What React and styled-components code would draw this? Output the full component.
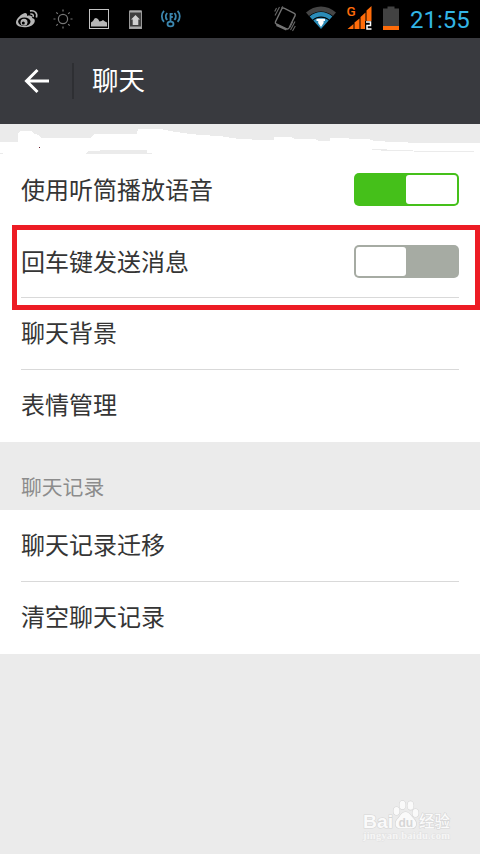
import React from "react"
import styled, { createGlobalStyle } from "styled-components"

const GlobalStyle = createGlobalStyle`
  * {
    box-sizing: border-box;
  }
  body {
    margin: 0;
    background: #ebebeb;
    font-family: "Noto Sans CJK SC", sans-serif;
  }
`

function WeiboIcon() {
  return (
    <Icon width="24" height="22" viewBox="15 8 24 22">
      <path
        d="M16 22.500C16 19 21.500 13.600 25 13c2 0 2.400 1.600 2 2.900 2.800-1 5.600-.4 5.200 2.100 2.700.7 3.300 2.600 2 4.900-2 3.300-6.200 4.400-10 4.300C19.300 27 16 25.500 16 22.500z"
        fill="#b5b5b5"
      />
      <ellipse cx="24.300" cy="21.800" rx="6.200" ry="4.200" fill="#000" />
      <circle cx="24" cy="22.300" r="3.500" fill="#b5b5b5" />
      <circle cx="23.300" cy="23" r="1.500" fill="#000" />
      <g fill="none" stroke="#b5b5b5" strokeWidth="1.600">
        <path d="M30 10.900c4.800-1 7.800 2.300 6.400 6.500" />
        <path d="M30.300 14c2.300-.4 3.400 1 2.800 2.900" />
      </g>
    </Icon>
  )
}

function SunIcon() {
  return (
    <Icon width="20" height="20" viewBox="53 9 20 20">
      <g fill="none" stroke="#777" strokeWidth="1.200">
        <circle cx="63" cy="19" r="4.600" />
        <path d="M63 9.500v2M63 26.500v2M53.500 19h2M70.500 19h2M56.300 12.300l1.500 1.500M68.200 24.200l1.500 1.500M69.700 12.300l-1.500 1.500M57.800 24.200l-1.500 1.500" />
      </g>
    </Icon>
  )
}

function PictureIcon() {
  return (
    <Icon width="20" height="20" viewBox="89 9 20 20">
      <rect x="89.500" y="9.500" width="19" height="19" fill="none" stroke="#c4c4c4" />
      <path d="M91 26.500v-4l2-1.500 1.500-2.500 1.500-.5 2 1 1.500 2.500 2-.5 1.500-1 2 1.500 2 1v4z" fill="#b5b5b5" />
    </Icon>
  )
}

function UploadIcon() {
  return (
    <Icon width="13" height="19" viewBox="129 9 13 19">
      <rect x="129.500" y="10" width="12" height="17.500" fill="#3e3e3e" stroke="#999" />
      <path d="M130 10.500h11M130 26.500h11" stroke="#aaa" strokeWidth="2" />
      <path d="M135.500 14l4.500 4.500h-1.700V24h-5.600v-5.500H131z" fill="#d0d0d0" />
    </Icon>
  )
}

function HotspotIcon() {
  return (
    <Icon width="20" height="18" viewBox="161 10 20 18">
      <g fill="none" stroke="#3b86ae" strokeWidth="1.800">
        <path d="M164 10.800c-2.900 3-2.900 8 0 11M177.600 10.800c2.900 3 2.900 8 0 11" />
        <path d="M167.200 13c-1.800 2-1.800 4.800 0 7M174.400 13c1.800 2 1.800 4.800 0 7" />
        <ellipse cx="170.500" cy="24" rx="3" ry="2.400" />
        <path d="M170.500 22v-9M170.500 13.800h2.300M170.500 17h2.300" />
      </g>
    </Icon>
  )
}

function VibrateIcon() {
  return (
    <Icon width="22" height="26" viewBox="274 5 22 26">
      <g fill="none" stroke="#747474" strokeWidth="1.400">
        <path d="M284 8.200l10.300 5.100q1.500.8.800 2.300L289 28q-.8 1.500-2.300.8L276.300 24q-1.500-.8-.8-2.300L281.700 9q.8-1.600 2.300-.8z" />
        <path d="M276.500 25l10 4.700" strokeWidth="2" />
      </g>
      <path
        d="M283 6.500l-1.500 1.500M279.500 7l-4.500 8.500M276.500 8l-1.800 3.500M295 21.500l-4.500 8.500M295.300 26l-2.800 5M292.800 21.500l-3 6"
        fill="none"
        stroke="#666"
        strokeWidth="1.100"
      />
    </Icon>
  )
}

function WifiIcon() {
  return (
    <Icon width="31" height="24" viewBox="306 6 31 24">
      <path d="M306 12.500c8.500-8 21.500-8 30 0l-3 3.500c-7-6-17-6-24 0z" fill="#454545" />
      <path d="M309.600 16.500c6.500-6 16.300-6 22.800 0l-3 3.200c-4.900-4.200-11.900-4.200-16.800 0z" fill="#2b8cb8" />
      <path d="M313.300 20.500c4.300-3.700 11.100-3.700 15.400 0L321 29z" fill="#2b8cb8" />
      <path d="M316.500 18.800h8.500v2.200h-1.400v2L321 27l-2.800-4v-2h-1.700z" fill="#fff" />
    </Icon>
  )
}

function SignalIcon() {
  return (
    <Icon width="26" height="26" viewBox="347 5 26 26">
      <text x="346.500" y="16" fill="#ff6c0a" fontFamily="Roboto, sans-serif" fontSize="13.500" fontWeight="500">
        G
      </text>
      <path d="M347.500 29l6-5v5zM354.500 22.500l5-4V29h-5zM360.500 17l5-4.500V29h-5zM366.500 10.500l5-4.500v23h-5z" fill="#ff6c0a" />
      <rect x="365" y="21" width="7" height="9" fill="#000" />
      <path d="M366 22h4.500v3.500H367v3.500h4.500" fill="none" stroke="#fff" strokeWidth="1.500" />
    </Icon>
  )
}

function BatteryIcon() {
  return (
    <Icon width="16" height="24" viewBox="383 6 16 24">
      <path d="M383 8.500h4.500V6.500h7v2H399V30h-16z" fill="#424242" />
      <path d="M383 26h16v4h-16z" fill="#ff6c0a" />
    </Icon>
  )
}

function BackIcon() {
  return (
    <Icon width="26" height="26" viewBox="0 0 26 26">
      <path d="M13.500 2L2.500 13l11 11M3 13h22" fill="none" stroke="#fff" strokeWidth="3" />
    </Icon>
  )
}

// white brush strokes that cover the top of the list
function Scribble() {
  return (
    <ScribbleSvg width="480" height="30" viewBox="0 124 480 30" shapeRendering="crispEdges">
      <path
        fill="#fff"
        d="M0 142h18v-8l2-3h11l2 2 5 2 4 3h49l3-4h43l1-5h22l10 2 13 2 17 2 20 1 19 3h13v1h22v-3h18v1l4 1h19l4 2h11v-3h19v1h19l6 2 21 1 26 1h59v11H0z"
      />
      <path fill="#ebebeb" d="M0 153h3v1H0zM85 154l3-3h11l1-1h47v3h5v1zM372 149h15v1h-15zM381 150h32v1h-32zM414 151h60v1h-60z" />
      <path fill="#6a1a28" d="M39 147h1v1h-1z" />
    </ScribbleSvg>
  )
}

function BaiduMark() {
  return (
    <Watermark width="94" height="46" viewBox="360 798 94 46">
      <g fill="#fafafa" stroke="#d6d6d6" strokeWidth="1.200" paintOrder="stroke">
        <ellipse cx="396.500" cy="811" rx="3" ry="4" />
        <ellipse cx="402.500" cy="805" rx="3" ry="4.300" />
        <ellipse cx="410.500" cy="805.500" rx="3" ry="4.300" />
        <ellipse cx="415.500" cy="813" rx="3" ry="4" />
        <path d="M405.500 812c-4 0-5 4-7.500 6.500-3.500 3-3.500 10 2.500 10h10.500c6 0 6.500-6 3-9.500-3-3-4.500-7-8.500-7z" />
        <text x="363" y="828" fontSize="19" fontWeight="700" textLength="30" lengthAdjust="spacingAndGlyphs">
          Bai
        </text>
        <text x="419" y="826.500" fontSize="15.500" fontWeight="500" fontFamily="Noto Sans CJK SC, sans-serif">
          经验
        </text>
      </g>
      <text
        x="363"
        y="839"
        fontFamily="Liberation Serif, serif"
        fontSize="10.500"
        fontWeight="700"
        fill="#f6f6f6"
        stroke="#e0e0e0"
        strokeWidth="0.800"
        paintOrder="stroke"
        textLength="87"
      >
        jingyan.baidu.com
      </text>
      <text x="398.500" y="826.500" fontSize="12" fontWeight="700" fill="#d6d6d6">
        du
      </text>
    </Watermark>
  )
}

function Switch({ on }) {
  return (
    <Track $on={on} role="switch" aria-checked={on}>
      <Knob $on={on} />
    </Track>
  )
}

function App() {
  return (
    <Screen>
      <GlobalStyle />
      <StatusBar>
        <Notifications>
          <WeiboIcon />
          <SunIcon />
          <PictureIcon />
          <UploadIcon />
          <HotspotIcon />
        </Notifications>
        <SystemIcons>
          <VibrateIcon />
          <WifiIcon />
          <SignalIcon />
          <BatteryIcon />
          <Clock>21:55</Clock>
        </SystemIcons>
      </StatusBar>
      <Header>
        <BackIcon />
        <Separator />
        <Title>聊天</Title>
      </Header>
      <Band>
        <Scribble />
      </Band>
      <Group>
        <Row>
          <SwitchLabel>使用听筒播放语音</SwitchLabel>
          <Switch on={true} />
        </Row>
        <Row>
          <SwitchLabel>回车键发送消息</SwitchLabel>
          <Switch on={false} />
          <Highlight />
        </Row>
        <Row>
          <Label>聊天背景</Label>
        </Row>
        <Row>
          <Label>表情管理</Label>
        </Row>
      </Group>
      <SectionTitle>聊天记录</SectionTitle>
      <Group>
        <Row>
          <Label>聊天记录迁移</Label>
        </Row>
        <Row>
          <Label>清空聊天记录</Label>
        </Row>
      </Group>
      <BaiduMark />
    </Screen>
  )
}

export default App

const Screen = styled.div`
  position: relative;
  width: 480px;
  height: 854px;
  overflow: hidden;
  background: #ebebeb;
`

const Icon = styled.svg`
  display: block;
  flex: none;
  overflow: visible;
`

///////////////////// Top bars ////////////////////////

const StatusBar = styled.div`
  display: flex;
  justify-content: space-between;
  height: 38px;
  padding: 0 9px 0 15px;
  background: #000;
`

const Notifications = styled.div`
  display: flex;
  align-items: center;
  height: 38px;

  ${Icon}:nth-child(2) {
    margin-left: 14px;
  }
  ${Icon}:nth-child(3) {
    margin-left: 16px;
  }
  ${Icon}:nth-child(4) {
    margin-left: 20px;
  }
  ${Icon}:nth-child(5) {
    margin-left: 19px;
  }
`

const SystemIcons = styled.div`
  display: flex;
  align-items: center;
  gap: 10px;
  height: 36px;
`

const Clock = styled.span`
  width: 62px;
  padding: 3px 0 0 1px;
  font-family: Roboto, sans-serif;
  font-size: 24px;
  line-height: 36px;
  color: #33b5e5;
  white-space: nowrap;
`

const Header = styled.header`
  display: flex;
  align-items: center;
  height: 86px;
  padding-left: 24px;
  background: #393a3f;
`

const Separator = styled.div`
  width: 2px;
  height: 36px;
  margin: 0 18px 0 22px;
  background: #2e2f33;
`

const Title = styled.h1`
  margin: 0;
  padding-bottom: 4px;
  font-size: 26.5px;
  font-weight: 400;
  line-height: 82px;
  color: #fff;
`

///////////////////// Settings list ////////////////////////

const Band = styled.div`
  height: 30px;
`

const ScribbleSvg = styled.svg`
  display: block;
`

const Group = styled.section`
  background: #fff;
`

const Row = styled.div`
  position: relative;
  display: flex;
  align-items: center;
  justify-content: space-between;
  height: 72px;
  margin: 0 21px;
  border-bottom: 1px solid #d9d9d9;

  &:last-child {
    border-bottom-color: transparent;
  }
`

const Label = styled.span`
  padding-bottom: 3px;
  font-size: 24px;
  line-height: 36px;
  color: #353535;
`

const SwitchLabel = styled(Label)`
  padding-bottom: 1px;
`

const Highlight = styled.div`
  position: absolute;
  top: -1px;
  left: -9px;
  right: -21px;
  height: 85px;
  border: 5px solid #ed1c24;
  z-index: 1;
`

const Track = styled.div`
  display: flex;
  justify-content: ${props => (props.$on ? "flex-end" : "flex-start")};
  width: 105px;
  height: 33px;
  padding: 2px;
  border-radius: 5px;
  background: ${props => (props.$on ? "#45c01a" : "#a6aba3")};
`

const Knob = styled.div`
  width: ${props => (props.$on ? "51px" : "50px")};
  border-radius: 3px;
  background: #fff;
`

const SectionTitle = styled.h2`
  height: 68px;
  margin: 0;
  padding: 29px 21px 0;
  font-size: 20.8px;
  font-weight: 400;
  line-height: 30px;
  color: #8c8c8c;
`

const Watermark = styled.svg`
  position: absolute;
  right: 26px;
  bottom: 10px;
  font-family: "Liberation Sans", sans-serif;
`
